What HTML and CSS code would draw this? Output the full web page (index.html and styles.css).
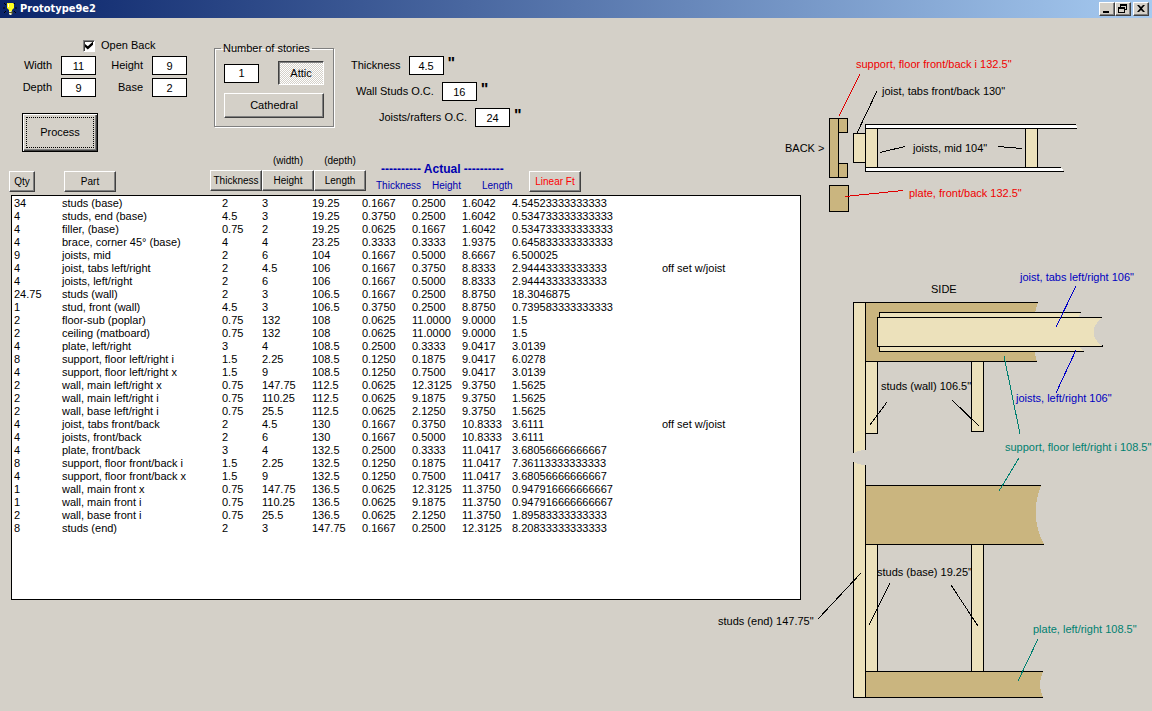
FILE: index.html
```html
<!DOCTYPE html>
<html lang="en">
<head>
<meta charset="utf-8">
<title>Prototype9e2</title>
<link rel="stylesheet" href="styles.css">
</head>
<body>
<header class="titlebar">
  <svg class="app-icon" width="16" height="16" viewBox="0 0 16 16" aria-hidden="true">
    <path d="M2 2l2 2M1 7h2M2 12l2-2M13 2l-2 2M15 7h-2M14 12l-2-2" stroke="#000" fill="none"/>
    <path d="M5 2h6l1 1v4l-2 2v1H7V9L5 7z" fill="#ffff20"/>
    <path d="M7 10h3v3l-1 1H8l-1-1z" fill="#f0f0d0"/>
    <path d="M7 11.500h3M10 10v3" stroke="#606020" fill="none"/>
    <path d="M6.500 3v3" stroke="#fff"/>
  </svg>
  <h1 class="title">Prototype9e2</h1>
  <div class="window-buttons">
    <button class="win" aria-label="Minimize"><svg width="14" height="12" viewBox="0 0 14 12"><path d="M3 8h6v2H3z"/></svg></button>
    <button class="win" aria-label="Restore"><svg width="14" height="12" viewBox="0 0 14 12"><path fill-rule="evenodd" d="M4 1h7v6H9V6h1V3H5v1H4zM2 4h7v6H2zM3 6v3h5V6z"/></svg></button>
    <button class="win close" aria-label="Close"><svg width="14" height="12" viewBox="0 0 14 12"><path d="M3 2h2l2 2 2-2h2L8 5.500 11 9H9L7 7 5 9H3l3-3.500z"/></svg></button>
  </div>
</header>
<main class="workspace">
  <section class="left">
    <form class="controls" onsubmit="return false">
      <div class="size-block">
        <label class="check-label"><input class="check" type="checkbox" checked>Open Back</label>
        <div class="size-grid">
          <label for="width">Width</label><input class="box" id="width" value="11">
          <label for="height">Height</label><input class="box" id="height" value="9">
          <label for="depth">Depth</label><input class="box" id="depth" value="9">
          <label for="base">Base</label><input class="box" id="base" value="2">
        </div>
        <button class="process"><span class="focus">Process</span></button>
      </div>
      <fieldset class="stories">
        <legend>Number of stories</legend>
        <div class="stories-row">
          <input class="box" aria-label="Number of stories" value="1">
          <button class="btn attic" aria-pressed="true">Attic</button>
        </div>
        <button class="btn cathedral">Cathedral</button>
      </fieldset>
      <div class="spacing">
        <div class="spacing-row"><label for="thick">Thickness</label><input class="box" id="thick" value="4.5"><span class="inch">"</span></div>
        <div class="spacing-row studs"><label for="studs">Wall Studs O.C.</label><input class="box" id="studs" value="16"><span class="inch">"</span></div>
        <div class="spacing-row joists"><label for="joists">Joists/rafters O.C.</label><input class="box" id="joists" value="24"><span class="inch">"</span></div>
      </div>
    </form>

    <div class="heads">
      <button class="head qty">Qty</button>
      <button class="head part">Part</button>
      <div class="head-group">
        <div class="head-col"><button class="head">Thickness</button></div>
        <div class="head-col"><span>(width)</span><button class="head">Height</button></div>
        <div class="head-col"><span>(depth)</span><button class="head">Length</button></div>
      </div>
      <div class="actual">
        <strong>---------- Actual ----------</strong>
        <div class="actual-names"><span>Thickness</span><span>Height</span><span>Length</span></div>
      </div>
      <button class="head linear">Linear Ft</button>
    </div>

    <div class="list">
      <table class="parts" aria-label="Parts">
        <colgroup><col class="c-qty"><col class="c-part"><col class="c-thick"><col class="c-dim"><col class="c-dim"><col class="c-dim"><col class="c-dim"><col class="c-dim"><col class="c-linear"><col></colgroup>
        <tbody>
          <tr><td>34</td><td>studs (base)</td><td>2</td><td>3</td><td>19.25</td><td>0.1667</td><td>0.2500</td><td>1.6042</td><td>4.54523333333333</td><td></td></tr>
          <tr><td>4</td><td>studs, end (base)</td><td>4.5</td><td>3</td><td>19.25</td><td>0.3750</td><td>0.2500</td><td>1.6042</td><td>0.534733333333333</td><td></td></tr>
          <tr><td>4</td><td>filler, (base)</td><td>0.75</td><td>2</td><td>19.25</td><td>0.0625</td><td>0.1667</td><td>1.6042</td><td>0.534733333333333</td><td></td></tr>
          <tr><td>4</td><td>brace, corner 45° (base)</td><td>4</td><td>4</td><td>23.25</td><td>0.3333</td><td>0.3333</td><td>1.9375</td><td>0.645833333333333</td><td></td></tr>
          <tr><td>9</td><td>joists, mid</td><td>2</td><td>6</td><td>104</td><td>0.1667</td><td>0.5000</td><td>8.6667</td><td>6.500025</td><td></td></tr>
          <tr><td>4</td><td>joist, tabs left/right</td><td>2</td><td>4.5</td><td>106</td><td>0.1667</td><td>0.3750</td><td>8.8333</td><td>2.94443333333333</td><td>off set w/joist</td></tr>
          <tr><td>4</td><td>joists, left/right</td><td>2</td><td>6</td><td>106</td><td>0.1667</td><td>0.5000</td><td>8.8333</td><td>2.94443333333333</td><td></td></tr>
          <tr><td>24.75</td><td>studs (wall)</td><td>2</td><td>3</td><td>106.5</td><td>0.1667</td><td>0.2500</td><td>8.8750</td><td>18.3046875</td><td></td></tr>
          <tr><td>1</td><td>stud, front (wall)</td><td>4.5</td><td>3</td><td>106.5</td><td>0.3750</td><td>0.2500</td><td>8.8750</td><td>0.739583333333333</td><td></td></tr>
          <tr><td>2</td><td>floor-sub (poplar)</td><td>0.75</td><td>132</td><td>108</td><td>0.0625</td><td>11.0000</td><td>9.0000</td><td>1.5</td><td></td></tr>
          <tr><td>2</td><td>ceiling (matboard)</td><td>0.75</td><td>132</td><td>108</td><td>0.0625</td><td>11.0000</td><td>9.0000</td><td>1.5</td><td></td></tr>
          <tr><td>4</td><td>plate, left/right</td><td>3</td><td>4</td><td>108.5</td><td>0.2500</td><td>0.3333</td><td>9.0417</td><td>3.0139</td><td></td></tr>
          <tr><td>8</td><td>support, floor left/right i</td><td>1.5</td><td>2.25</td><td>108.5</td><td>0.1250</td><td>0.1875</td><td>9.0417</td><td>6.0278</td><td></td></tr>
          <tr><td>4</td><td>support, floor left/right x</td><td>1.5</td><td>9</td><td>108.5</td><td>0.1250</td><td>0.7500</td><td>9.0417</td><td>3.0139</td><td></td></tr>
          <tr><td>2</td><td>wall, main left/right x</td><td>0.75</td><td>147.75</td><td>112.5</td><td>0.0625</td><td>12.3125</td><td>9.3750</td><td>1.5625</td><td></td></tr>
          <tr><td>2</td><td>wall, main left/right i</td><td>0.75</td><td>110.25</td><td>112.5</td><td>0.0625</td><td>9.1875</td><td>9.3750</td><td>1.5625</td><td></td></tr>
          <tr><td>2</td><td>wall, base left/right i</td><td>0.75</td><td>25.5</td><td>112.5</td><td>0.0625</td><td>2.1250</td><td>9.3750</td><td>1.5625</td><td></td></tr>
          <tr><td>4</td><td>joist, tabs front/back</td><td>2</td><td>4.5</td><td>130</td><td>0.1667</td><td>0.3750</td><td>10.8333</td><td>3.6111</td><td>off set w/joist</td></tr>
          <tr><td>4</td><td>joists, front/back</td><td>2</td><td>6</td><td>130</td><td>0.1667</td><td>0.5000</td><td>10.8333</td><td>3.6111</td><td></td></tr>
          <tr><td>4</td><td>plate, front/back</td><td>3</td><td>4</td><td>132.5</td><td>0.2500</td><td>0.3333</td><td>11.0417</td><td>3.68056666666667</td><td></td></tr>
          <tr><td>8</td><td>support, floor front/back i</td><td>1.5</td><td>2.25</td><td>132.5</td><td>0.1250</td><td>0.1875</td><td>11.0417</td><td>7.36113333333333</td><td></td></tr>
          <tr><td>4</td><td>support, floor front/back x</td><td>1.5</td><td>9</td><td>132.5</td><td>0.1250</td><td>0.7500</td><td>11.0417</td><td>3.68056666666667</td><td></td></tr>
          <tr><td>1</td><td>wall, main front x</td><td>0.75</td><td>147.75</td><td>136.5</td><td>0.0625</td><td>12.3125</td><td>11.3750</td><td>0.947916666666667</td><td></td></tr>
          <tr><td>1</td><td>wall, main front i</td><td>0.75</td><td>110.25</td><td>136.5</td><td>0.0625</td><td>9.1875</td><td>11.3750</td><td>0.947916666666667</td><td></td></tr>
          <tr><td>2</td><td>wall, base front i</td><td>0.75</td><td>25.5</td><td>136.5</td><td>0.0625</td><td>2.1250</td><td>11.3750</td><td>1.89583333333333</td><td></td></tr>
          <tr><td>8</td><td>studs (end)</td><td>2</td><td>3</td><td>147.75</td><td>0.1667</td><td>0.2500</td><td>12.3125</td><td>8.20833333333333</td><td></td></tr>
        </tbody>
      </table>
    </div>
  </section>

  <svg class="diagram" width="351" height="693" viewBox="801 18 351 693" role="img" aria-label="Framing diagrams">
    <!-- back section -->
    <g class="dark">
      <rect x="829.5" y="118.5" width="9" height="59"/>
      <rect x="838.5" y="118.5" width="9" height="14"/>
      <rect x="838.5" y="163.5" width="9" height="14"/>
      <rect x="829.5" y="185.5" width="19" height="26"/>
    </g>
    <g class="light">
      <rect x="853.5" y="133.5" width="12" height="29"/>
      <rect x="865.5" y="124.5" width="12" height="47"/>
      <rect x="1025.5" y="128.500" width="12" height="39"/>
    </g>
    <path class="sheet" d="M1076 124.500H865.500V128.500H1077M1064 171.500H865.500V167.500H1061"/>
    <path class="lead red" d="M860 74L839 116M845 196.500L903 190.500"/>
    <path class="lead" d="M877 91L857 133M880 152.500L905 146.500M998 146.500L1022 148.500"/>
    <text class="t-red" x="856" y="68">support, floor front/back i 132.5"</text>
    <text x="882" y="95">joist, tabs front/back 130"</text>
    <text x="785" y="152">BACK &gt;</text>
    <text x="913" y="152">joists, mid 104"</text>
    <text class="t-red" x="909" y="197">plate, front/back 132.5"</text>

    <!-- side section: end stud, broken in the middle -->
    <path class="fill-light" d="M853.500 302.500H865.500V450Q859 450 853.500 453zM853.500 462Q859 465 865.500 465V697.500H853.500z"/>
    <path class="lead" d="M853.500 453V302.500H865.500V450M853.500 462V697.500H865.500V465"/>

    <path class="fill-dark" d="M865.500 302.500H1038Q1028 332 1037 361.500H865.500z"/>
    <path class="lead" d="M865.500 302.500H1038M865.500 361.500H1037"/>
    <path class="fill-light" d="M879.500 312.500H1081L1078 318V346L1084 351.500H879.500z"/>
    <path class="lead" d="M1081 312.500H879.500V351.500H1084"/>
    <path class="fill-light" d="M877.500 317.500H1102Q1085 332 1102 346.500H877.500z"/>
    <path class="lead" d="M1102 317.500H877.500V346.500H1102V345"/>
    <g class="light">
      <rect x="865.5" y="361.5" width="12" height="72"/>
      <rect x="971.5" y="361.5" width="12" height="70"/>
      <rect x="865.5" y="544.5" width="12" height="127"/>
      <rect x="971.5" y="544.5" width="12" height="127"/>
    </g>
    <path class="fill-dark" d="M865.500 485.500H1041Q1029 516 1044 544.500H865.500zM865.500 671.500H1043Q1037 684 1043 697.500H865.500z"/>
    <path class="lead" d="M865.500 485.500H1041M865.500 544.500H1044M865.500 671.500H1043M865.500 697.500H1043"/>
    <path class="lead" d="M887 402L870 425M952 400L979 426M861 573L818 619M890 583L869 625M951 585L978 626"/>
    <path class="lead blue" d="M1076 286L1056 327M1076 350L1056 393"/>
    <path class="lead teal" d="M1004 356L1020 434M1019 458L999 491M1038 639L1018 681"/>
    <text x="931" y="293">SIDE</text>
    <text class="t-blue" x="1020" y="281">joist, tabs left/right 106"</text>
    <text x="881" y="390">studs (wall) 106.5"</text>
    <text class="t-blue" x="1016" y="402">joists, left/right 106"</text>
    <text class="t-teal" x="1005" y="451">support, floor left/right i 108.5"</text>
    <text x="877" y="576">studs (base) 19.25"</text>
    <text x="718" y="625">studs (end) 147.75"</text>
    <text class="t-teal" x="1033" y="633">plate, left/right 108.5"</text>
  </svg>
</main>
</body>
</html>
```
FILE: styles.css
```css
* { box-sizing: border-box; }

body {
  margin: 0;
  min-height: 100vh;
  display: flex;
  flex-direction: column;
  background: #d4d0c8;
  color: #000;
  font: 11px/13px "Liberation Sans", Arial, sans-serif;
}

button, input { font: inherit; color: inherit; margin: 0; }
button { padding: 0; white-space: nowrap; }

/* title bar */
.titlebar {
  height: 18px;
  display: flex;
  align-items: center;
  gap: 2px;
  padding: 0 3px 0 2px;
  background: linear-gradient(90deg, #0a246a, #a6caf0);
}
.title {
  margin: 0;
  color: #fff;
  font: bold 11px/16px "DejaVu Sans Condensed", "DejaVu Sans", sans-serif;
}
.window-buttons { display: flex; margin-left: auto; }
.win {
  width: 16px;
  height: 14px;
  display: flex;
  background: #d4d0c8;
  border: 1px solid;
  border-color: #fff #404040 #404040 #fff;
  box-shadow: inset -1px -1px #808080;
}
.win svg { flex: none; }
.win.close { margin-left: 2px; }

/* page columns */
.workspace {
  flex: 1;
  display: grid;
  grid-template-columns: minmax(0, 1fr) 351px;
}
.left {
  display: flex;
  flex-direction: column;
  padding: 21px 0 111px 11px;
}
.diagram { overflow: visible; }

/* controls */
.controls {
  display: flex;
  align-items: flex-start;
  padding-left: 11px;
}
.box {
  width: 35px;
  height: 19px;
  padding: 0;
  border: 1px solid #000;
  background: #fff;
  text-align: center;
}
.check-label {
  display: flex;
  align-items: center;
  gap: 6px;
  padding-left: 61px;
}
.check {
  appearance: none;
  display: grid;
  place-items: center;
  width: 12px;
  height: 12px;
  border: 1px solid;
  border-color: #808080 #fff #fff #808080;
  box-shadow: inset 1px 1px #404040;
  background: #fff;
}
.check:checked::after {
  content: "";
  width: 8px;
  height: 8px;
  background: #000;
  clip-path: polygon(0 30%, 35% 60%, 100% 0, 100% 42%, 35% 100%, 0 70%);
}
.size-grid {
  display: grid;
  grid-template-columns: 33px 35px 44px 35px;
  gap: 3px 6px;
  align-items: center;
  justify-items: end;
  margin-top: 4px;
}
.size-grid label { padding-right: 3px; }
.process {
  width: 76px;
  height: 39px;
  margin-top: 16px;
  display: flex;
  padding: 2px;
  background: #d4d0c8;
  border: 1px solid #000;
  box-shadow: inset 1px 1px #fff, inset -1px -1px #404040, inset -2px -2px #808080;
}
.focus {
  flex: 1;
  display: grid;
  place-items: center;
  margin: 1px;
  border: 1px dotted #000;
}
.btn, .head {
  background: #d4d0c8;
  border: 1px solid;
  border-color: #fff #404040 #404040 #fff;
  box-shadow: inset -1px -1px #808080;
}
.stories {
  width: 120px;
  margin: 3px 0 0 27px;
  padding: 6px 9px 8px;
  display: flex;
  flex-direction: column;
  gap: 8px;
  border: 1px solid #808080;
  box-shadow: 1px 1px #fff, inset 1px 1px #fff;
}
.stories legend { padding: 0 2px; margin-left: -3px; }
.stories-row { display: flex; justify-content: space-between; align-items: center; }
.attic {
  width: 46px;
  height: 24px;
  border-color: #404040 #fff #fff #404040;
  box-shadow: inset 1px 1px #808080;
  background: repeating-conic-gradient(#fff 0 25%, #d4d0c8 0 50%) 0 0 / 2px 2px;
}
.cathedral { height: 25px; }

.spacing {
  display: flex;
  flex-direction: column;
  gap: 7px;
  padding: 17px 0 0 17px;
}
.spacing-row { display: flex; align-items: center; gap: 8px; }
.spacing-row.studs { padding-left: 5px; }
.spacing-row.joists { padding-left: 28px; }
.inch {
  align-self: flex-start;
  margin-left: -4px;
  font-size: 16px;
  line-height: 16px;
  font-weight: bold;
}

/* column headings */
.heads {
  display: flex;
  align-items: flex-end;
  margin: 3px 0 3px -2px;
  font-size: 10px;
  line-height: 12px;
}
.head { height: 21px; width: 52px; }
.qty { width: 26px; }
.part { margin-left: 29px; }
.head-group { display: flex; align-items: flex-end; margin: 0 0 1px 94px; }
.head-col { display: flex; flex-direction: column; align-items: center; gap: 3px; }
.actual {
  width: 136px;
  margin-left: 10px;
  color: #0000b0;
  display: flex;
  flex-direction: column;
  gap: 4px;
}
.actual strong { font-size: 12px; line-height: 13px; padding-left: 5px; white-space: nowrap; }
.actual-names { display: grid; grid-template-columns: 56px 50px auto; }
.linear { margin-left: 17px; color: #f00; }

/* parts list */
.list { flex: 1; padding-top: 1px; background: #fff; border: 1px solid #000; }
.parts { width: 100%; table-layout: fixed; border-collapse: collapse; }
.parts td { height: 13px; padding: 0 0 0 2px; white-space: nowrap; }
.c-qty { width: 48px; }
.c-part { width: 160px; }
.c-thick { width: 40px; }
.c-dim { width: 50px; }
.c-linear { width: 150px; }

/* drawings */
.diagram rect, .diagram path { shape-rendering: crispEdges; }
.dark rect, .fill-dark { fill: #cab57f; }
.light rect, .fill-light { fill: #ece1bb; }
.dark rect, .light rect { stroke: #000; }
.sheet { fill: #fff; stroke: #000; }
.lead { fill: none; stroke: #000; }
.lead.red { stroke: #e00000; }
.lead.blue { stroke: #0000c8; }
.lead.teal { stroke: #008070; }
.t-red { fill: #f00000; }
.t-blue { fill: #0000c0; }
.t-teal { fill: #008070; }
```
